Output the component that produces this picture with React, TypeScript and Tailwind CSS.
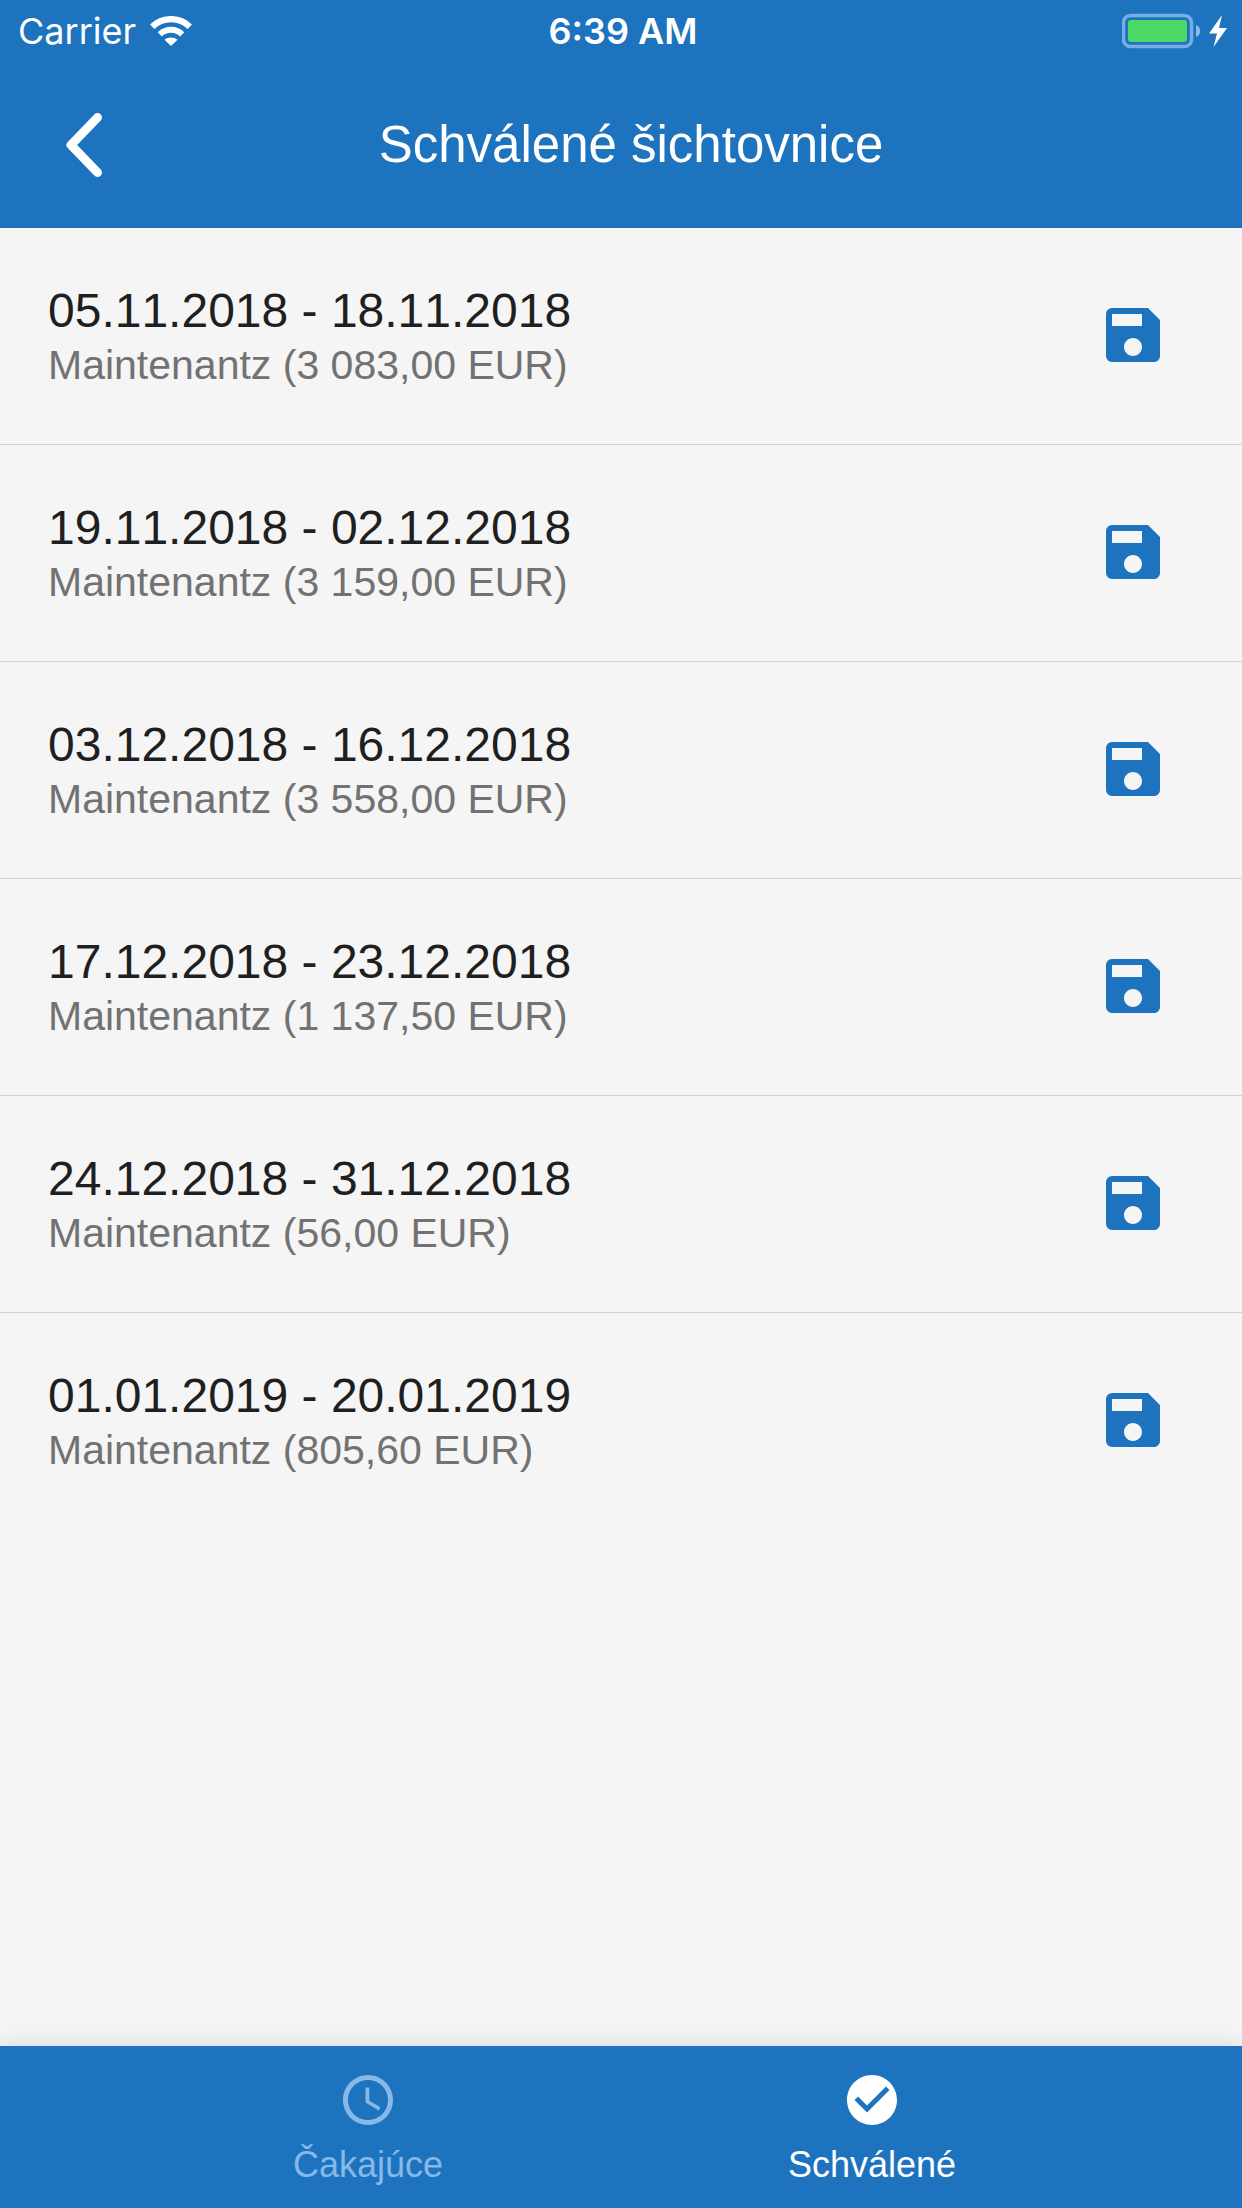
import { useState } from "react"
import { MdCheckCircle, MdSave, MdSchedule } from "react-icons/md"
import clsx from "clsx"

const timesheets = [
  { id: 1, period: "05.11.2018 - 18.11.2018", client: "Maintenantz", amount: "3 083,00 EUR" },
  { id: 2, period: "19.11.2018 - 02.12.2018", client: "Maintenantz", amount: "3 159,00 EUR" },
  { id: 3, period: "03.12.2018 - 16.12.2018", client: "Maintenantz", amount: "3 558,00 EUR" },
  { id: 4, period: "17.12.2018 - 23.12.2018", client: "Maintenantz", amount: "1 137,50 EUR" },
  { id: 5, period: "24.12.2018 - 31.12.2018", client: "Maintenantz", amount: "56,00 EUR" },
  { id: 6, period: "01.01.2019 - 20.01.2019", client: "Maintenantz", amount: "805,60 EUR" },
]

const tabs = [
  { id: "pending", label: "Čakajúce", icon: MdSchedule },
  { id: "approved", label: "Schválené", icon: MdCheckCircle },
]

function WifiIcon() {
  return (
    <svg viewBox="0 0 42 30" className="h-[30px] w-[42px]" fill="none" aria-hidden="true">
      <path d="M2.200 10.800C12.500 0.500 29.500 0.500 39.800 10.800" stroke="currentColor" strokeWidth="6.200" />
      <path d="M9.800 18.400C16 12.200 26 12.200 32.200 18.400" stroke="currentColor" strokeWidth="6" />
      <path d="M14.500 23.800C18.200 20.800 23.800 20.800 27.500 23.800L21 30Z" fill="currentColor" />
    </svg>
  )
}

function BatteryIcon() {
  return (
    <svg viewBox="0 0 106 36" className="h-9 w-[106px]" fill="none" aria-hidden="true">
      <rect x="1.5" y="2.5" width="68" height="31" rx="7" stroke="#78ade3" strokeWidth="3.5" />
      <rect x="6" y="7" width="59" height="22" rx="3" fill="#4cd964" />
      <path d="M74 12C79.5 13.5 79.5 22.500 74 24Z" fill="#8ab9e8" />
      <path d="M100 2L87 20.500H95L91.500 34L105 15H97Z" fill="white" />
    </svg>
  )
}

function StatusBar() {
  return (
    <div className="grid h-[62px] grid-cols-[1fr_auto_1fr] items-center pr-[14px] pl-[18px] font-['Inter',sans-serif] text-4xl">
      <div className="flex items-center gap-[14px]">
        <span>Carrier</span>
        <WifiIcon />
      </div>
      <span className="font-semibold">6:39 AM</span>
      <div className="flex justify-end">
        <BatteryIcon />
      </div>
    </div>
  )
}

function Header() {
  return (
    <header className="bg-[#1e73be] text-white">
      <StatusBar />
      <div className="flex h-[166px] items-center pr-[124px]">
        <button type="button" aria-label="Späť" className="flex h-36 w-36 items-center justify-center pl-6">
          <svg viewBox="0 0 36 64" className="h-16 w-9" fill="none" aria-hidden="true">
            <path d="M31.500 4.500L5 32L31.500 59.500" stroke="currentColor" strokeWidth="9" strokeLinecap="round" strokeLinejoin="round" />
          </svg>
        </button>
        <h1 className="flex-1 text-center text-[51px] leading-15">Schválené šichtovnice</h1>
      </div>
    </header>
  )
}

export default function App() {
  const [activeTab, setActiveTab] = useState("approved")

  return (
    <div className="flex min-h-screen flex-col bg-[#f5f5f5] font-['Liberation_Sans',Arial,sans-serif]">
      <Header />

      <main className="flex-1">
        <ul className="divide-y divide-[#d4d4d4]">
          {timesheets.map((sheet) => (
            <li key={sheet.id} className="flex items-start justify-between pt-[55px] pb-[53px] pr-[37px] pl-12">
              <div>
                <p className="text-5xl leading-14 text-[#1f1f1f] [font-kerning:none]">{sheet.period}</p>
                <p className="text-[41px] leading-13 text-[#727272]">
                  {sheet.client} ({sheet.amount})
                </p>
              </div>
              <button type="button" aria-label={`Uložiť ${sheet.period}`} className="px-9 py-4 text-[#1e73be]">
                <MdSave className="size-18" />
              </button>
            </li>
          ))}
        </ul>
      </main>

      <nav className="flex justify-center bg-[#1e73be] pr-0.5 shadow-[0_0_24px_rgba(0,0,0,0.12)]">
        {tabs.map(({ id, label, icon: Icon }) => (
          <button
            key={id}
            type="button"
            aria-current={activeTab === id ? "page" : undefined}
            onClick={() => setActiveTab(id)}
            className={clsx(
              "flex w-[504px] flex-col items-center gap-3 pt-6 pb-5",
              activeTab === id ? "text-white" : "text-[#86b8e9]"
            )}
          >
            <Icon className="size-15" />
            <span className="text-4xl leading-[46px]">{label}</span>
          </button>
        ))}
      </nav>
    </div>
  )
}
